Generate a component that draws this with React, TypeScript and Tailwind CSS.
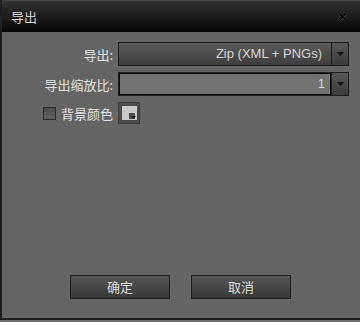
import React from 'react'

const cjk = { fontFamily: '"Noto Sans CJK SC", "Liberation Sans", sans-serif' }
const latin = { fontFamily: '"Liberation Sans", "Noto Sans CJK SC", sans-serif' }

const Arrow = () => (
  <div className="flex w-[17px] items-center justify-center border-l border-[#1c1c1c] bg-gradient-to-b from-[#575757] to-[#3b3b3b]">
    <svg width="7" height="4" viewBox="0 0 7 4">
      <path d="M0 0h7L3.5 4z" fill="#111" />
    </svg>
  </div>
)

const Label = ({ children }: { children: React.ReactNode }) => (
  <div className="w-[116px] pr-[5px] text-right text-[13px] leading-none text-[#e2e2e2]" style={cjk}>
    {children}
  </div>
)

const App = () => {
  return (
    <div className="h-[322px] w-[360px] bg-[#707070]">
      <div className="flex h-[320px] w-[360px] flex-col border-b-2 border-l-[2px] border-[#1e1e1e] bg-[#656565]">
        <div className="flex h-[32px] items-center justify-between border-t border-[#454545] bg-gradient-to-b from-[#333333] via-[#1c1c1c] to-[#080808] pl-[9px] pr-[13px]">
          <span className="text-[13px] text-[#d6d6d6]" style={cjk}>导出</span>
          <svg width="9" height="9" viewBox="0 0 9 9">
            <path d="M1.5 1.5l6 6M7.5 1.5l-6 6" stroke="#4a4a4a" strokeWidth="3.2" />
            <path d="M1.5 1.5l6 6M7.5 1.5l-6 6" stroke="#080808" strokeWidth="2" />
          </svg>
        </div>
        <div className="flex flex-1 flex-col pt-[10px]">
          <div className="flex flex-col gap-[6px]">
            <div className="flex items-center">
              <Label>导出:</Label>
              <div className="flex h-[24px] w-[231px] border border-[#1c1c1c] bg-gradient-to-b from-[#5b5b5b] to-[#3d3d3d]">
                <div className="flex flex-1 items-center justify-end pr-[9px] text-[13px] text-[#d4d4d4]" style={latin}>
                  Zip (XML + PNGs)
                </div>
                <Arrow />
              </div>
            </div>
            <div className="flex items-center">
              <Label>导出缩放比:</Label>
              <div className="flex h-[24px] w-[231px] border border-[#1c1c1c]">
                <div className="flex flex-1 items-center justify-end border border-[#0a0a0a] bg-[#737373] pr-[5px] text-[13px] text-[#d4d4d4]" style={latin}>
                  1
                </div>
                <Arrow />
              </div>
            </div>
            <div className="flex items-center">
              <div className="flex w-[116px] items-center justify-end gap-[5px] pr-[5px]">
                <div className="h-[13px] w-[13px] border border-[#2a2a2a] bg-gradient-to-b from-[#4e4e4e] to-[#5e5e5e]" />
                <span className="text-[13px] leading-none text-[#e2e2e2]" style={cjk}>背景颜色</span>
              </div>
              <div className="relative h-[22px] w-[22px] border border-[#3a3a3a] bg-[#4b4b4b] pl-[3px] pt-[3px]">
                <div className="h-[14px] w-[15px] bg-[#c8c8c8]" />
                <div className="absolute bottom-[4px] right-[4px] h-[6px] w-[6px] bg-[#4b4b4b]" />
                <svg className="absolute bottom-[4px] right-[3px]" width="5" height="3" viewBox="0 0 5 3">
                  <path d="M0 0h5L2.5 3z" fill="#151515" />
                </svg>
              </div>
            </div>
          </div>
          <div className="mt-auto flex justify-center gap-[21px] pb-[19px] pr-[1px]">
            <button className="h-[24px] w-[100px] border border-[#1e1e1e] bg-gradient-to-b from-[#555555] to-[#393939] text-[13px] text-[#dadada]" style={cjk}>
              确定
            </button>
            <button className="h-[24px] w-[100px] border border-[#1e1e1e] bg-gradient-to-b from-[#555555] to-[#393939] text-[13px] text-[#dadada]" style={cjk}>
              取消
            </button>
          </div>
        </div>
      </div>
    </div>
  )
}

export default App
